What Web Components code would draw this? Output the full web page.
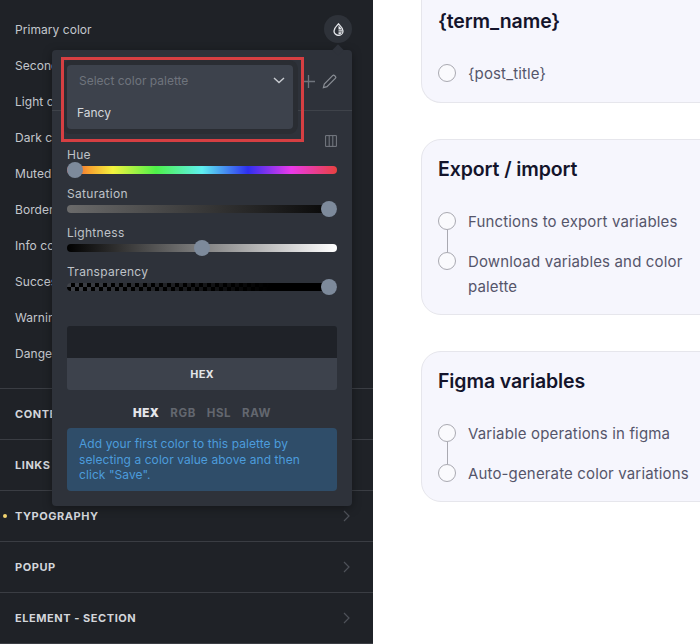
<!DOCTYPE html>
<html><head><meta charset="utf-8"><style>
html,body{margin:0;height:100%;overflow:hidden;background:#fff}
body{font-family:Inter,"Liberation Sans",sans-serif}
app-shell{height:644px;width:700px}
</style></head><body>
<app-shell>
  <side-panel slot="side">
    <color-row label="Primary color" active></color-row>
    <color-row label="Secondary color"></color-row>
    <color-row label="Light color"></color-row>
    <color-row label="Dark color"></color-row>
    <color-row label="Muted color"></color-row>
    <color-row label="Border color"></color-row>
    <color-row label="Info color"></color-row>
    <color-row label="Success color"></color-row>
    <color-row label="Warning color"></color-row>
    <color-row label="Danger color"></color-row>
    <section-row slot="sections" label="Content"></section-row>
    <section-row slot="sections" label="Links"></section-row>
    <section-row slot="sections" label="Typography" dot></section-row>
    <section-row slot="sections" label="Popup"></section-row>
    <section-row slot="sections" label="Element - Section"></section-row>
    <color-popup slot="overlay"></color-popup>
  </side-panel>
  <info-card slot="main" title="{term_name}" class="first">
    <step-item last>{post_title}</step-item>
  </info-card>
  <info-card slot="main" title="Export / import">
    <step-item>Functions to export variables</step-item>
    <step-item last>Download variables and color palette</step-item>
  </info-card>
  <info-card slot="main" title="Figma variables">
    <step-item>Variable operations in figma</step-item>
    <step-item last>Auto-generate color variations</step-item>
  </info-card>
</app-shell>
<script>
function def(name, html, extra){
  const t=document.createElement('template');t.innerHTML=html;
  customElements.define(name,class extends HTMLElement{
    constructor(){super();this.attachShadow({mode:'open'}).appendChild(t.content.cloneNode(true));}
    connectedCallback(){if(extra)extra(this,this.shadowRoot);}
  });
}
def('app-shell',`<style>
:host{display:grid;grid-template-columns:373px 1fr;overflow:hidden}
.main{display:flex;flex-direction:column;gap:36px;padding-left:48px;margin-right:-60px;min-width:0}
</style><slot name="side"></slot><div class="main"><slot name="main"></slot></div>`);

def('side-panel',`<style>
:host{display:block;position:relative;background:#1f2227;height:644px;color:#c9ccd2}
.rows{display:flex;flex-direction:column;padding-top:11px;height:366px;box-sizing:border-box}
.sections{display:flex;flex-direction:column;border-top:1px solid #3a3d43;margin-top:22px}
</style><div class="rows"><slot></slot></div><div class="sections"><slot name="sections"></slot></div><slot name="overlay"></slot>`);

def('color-row',`<style>
:host{display:flex;align-items:center;justify-content:space-between;height:36px;padding:0 21px 0 15px;font-size:12px;letter-spacing:.05px;color:#c4c7cd;flex:none}
.sw{width:28px;height:28px;border-radius:50%;background:#2e3239;display:none;align-items:center;justify-content:center}
:host([active]) .sw{display:flex}
svg{display:block}
</style><span id="l"></span><span class="sw"><svg width="11" height="13" viewBox="0 0 11 13"><path d="M5.500.9C4 2.800 1 4.700 1 7.900a4.500 4.500 0 0 0 9 0C10 4.700 7 2.800 5.500.9Z" fill="none" stroke="#e4e6ea" stroke-width="1.300"/><path d="M5.500 2.500C6.800 3.800 8.100 5 8.700 6.400H5.500ZM5.500 7.300H9.200V8.400H5.500ZM5.500 9.300H8.900A3.500 3.500 0 0 1 5.500 11.500Z" fill="#e4e6ea"/></svg></span>`,
(h,s)=>{s.getElementById('l').textContent=h.getAttribute('label');});

def('section-row',`<style>
:host{display:flex;align-items:center;justify-content:space-between;height:50px;border-bottom:1px solid #3a3d43;padding:0 23px 0 15px;position:relative;font-size:11px;font-weight:700;letter-spacing:.55px;text-transform:uppercase;color:#d3d6db;flex:none}
.dot{display:none;position:absolute;left:3px;top:23px;width:4px;height:4px;border-radius:50%;background:#f3d46f}
:host([dot]) .dot{display:block}
</style><span class="dot"></span><span id="l"></span><svg width="7" height="12" viewBox="0 0 7 12"><path d="M1 1l5 5-5 5" fill="none" stroke="#4e5259" stroke-width="1.200"/></svg>`,
(h,s)=>{s.getElementById('l').textContent=h.getAttribute('label');});

def('palette-bar',`<style>
:host{display:flex;align-items:flex-start;justify-content:space-between;height:61px;border-bottom:1px solid #3f434a;padding:15px 15px 0;box-sizing:border-box;position:relative}
.sel{width:226px;height:64px;background:#3d424c;border-radius:4px;box-shadow:0 0 0 5px #2a2d33;display:flex;flex-direction:column;font-size:12px;position:absolute;left:15px;top:15px;z-index:1}
.head{height:31px;display:flex;align-items:center;justify-content:space-between;padding:0 8px 0 12px;color:#6f747d;flex:none}
.opt{flex:1;display:flex;align-items:center;padding:0 10px;color:#d5d8dd}
.tools{margin-left:auto;display:flex;align-items:center;gap:7px;height:32px}
.hl{position:absolute;left:9px;top:7px;width:243px;height:85px;box-sizing:border-box;border:3px solid #d63f42;z-index:2;pointer-events:none}
</style>
<div class="sel"><div class="head"><span>Select color palette</span><svg width="12" height="7" viewBox="0 0 12 7"><path d="M1 1l5 4.600L11 1" fill="none" stroke="#c8cbd0" stroke-width="1.400"/></svg></div><div class="opt">Fancy</div></div>
<div class="hl"></div>
<div class="tools"><svg width="13" height="13" viewBox="0 0 13 13"><path d="M6.500 0v13M0 6.500h13" stroke="#70757d" stroke-width="1.300"/></svg>
<svg width="15" height="15" viewBox="0 0 15 15"><path d="M1.400 13.600l.9-3.600L10.600 1.700a1.500 1.500 0 0 1 2.100 0l.6.6a1.500 1.500 0 0 1 0 2.100L5 12.700Z" fill="none" stroke="#8a8e95" stroke-width="1.200"/></svg></div>`);

def('hsl-slider',`<style>
:host{display:block;height:39px;font-size:12px;letter-spacing:.3px;color:#bfc2c8;flex:none}
.l{display:block;height:15px;line-height:15px}
.t{position:relative;height:8px;margin-top:4px;border-radius:4px}
.k{position:absolute;top:-4px;width:16px;height:16px;border-radius:50%;background:#7d8a9b}
</style><span class="l" id="l"></span><div class="t" id="t"><div class="k" id="k"></div></div>`,
(h,s)=>{s.getElementById('l').textContent=h.getAttribute('label');
 s.getElementById('t').style.background=h.getAttribute('track');
 s.getElementById('k').style.left=h.getAttribute('pos');});

def('color-popup',`<style>
:host{display:block;position:absolute;left:52px;top:50px;width:300px;height:456px;background:#2e323a;border-radius:4px;box-shadow:0 2px 10px rgba(0,0,0,.35)}
.arrow{position:absolute;right:10px;top:-4px;width:8px;height:8px;background:#2e323a;transform:rotate(45deg)}
.body{padding:0 15px;display:flex;flex-direction:column}
.g{display:flex;justify-content:flex-end;height:12px;align-items:center;margin-top:24px}
.sl{display:flex;flex-direction:column}
.box{height:32px;background:#1f2228;border-radius:3px 3px 0 0;margin-top:23px}
.btn{height:32px;background:#3d424c;border-radius:0 0 3px 3px;display:flex;align-items:center;justify-content:center;font:700 11.500px "Roboto",sans-serif;letter-spacing:.6px;color:#e2e4e8}
.tabs{display:flex;justify-content:center;gap:11px;font-size:11.500px;font-weight:700;letter-spacing:.55px;color:#63676f;margin-top:16px;height:14px;line-height:14px}
.tabs b{color:#e4e6ea}
.note{margin-top:8px;background:#2f4d69;border-radius:4px;color:#4c9cdc;font-size:12px;line-height:15.500px;padding:8px 12px;height:63px;box-sizing:border-box;letter-spacing:.07px}
</style><div class="arrow"></div><palette-bar></palette-bar>
<div class="body">
<div class="g"><svg width="12" height="12" viewBox="0 0 12 12"><path d="M.6.6h10.800v10.800H.6zM4.200.6v10.800M7.800.6v10.800" fill="none" stroke="#777b83" stroke-width="1"/></svg></div>
<div class="sl">
<hsl-slider label="Hue" pos="0" track="linear-gradient(90deg,#e8413f 0%,#f9a02f 8%,#f4f33e 17%,#4ef14a 33%,#5ff0f0 50%,#2e2ff0 67%,#e93ae9 83%,#e8413f 100%)"></hsl-slider>
<hsl-slider label="Saturation" pos="254px" track="linear-gradient(90deg,#6b6b6b,#060606)"></hsl-slider>
<hsl-slider label="Lightness" pos="127px" track="linear-gradient(90deg,#000,#808080 50%,#fff)"></hsl-slider>
<hsl-slider label="Transparency" pos="254px" track="linear-gradient(90deg,transparent 0,#000 75%),repeating-conic-gradient(#000 0 25%,#3f4249 0 50%) 0 0/8px 8px"></hsl-slider>
</div>
<div class="box"></div><div class="btn">HEX</div>
<div class="tabs"><b>HEX</b><span>RGB</span><span>HSL</span><span>RAW</span></div>
<div class="note">Add your first color to this palette by selecting a color value above and then click "Save".</div>
</div>`);

def('info-card',`<style>
:host{display:block;background:#f6f6fd;border:1px solid #e6e6ec;border-radius:20px;padding:15px 16px 15px;box-sizing:border-box}
:host(.first){border-top:0;border-radius:0 0 20px 20px;padding-top:7px;padding-bottom:16px}
h3{margin:0 0 26px;font:600 19.500px/28px Inter,sans-serif;color:#14142b;letter-spacing:-.1px}
.list{display:flex;flex-direction:column}
</style><h3 id="t"></h3><div class="list"><slot></slot></div>`,
(h,s)=>{s.getElementById('t').textContent=h.getAttribute('title');});

def('step-item',`<style>
:host{display:grid;grid-template-columns:18px 1fr;column-gap:12px;font-size:15px;letter-spacing:.15px;line-height:25px;color:#55556a;padding-bottom:15px;position:relative;max-width:262px}
:host([last]){padding-bottom:0}
.c{width:16px;height:16px;border:1px solid #a9a9b1;border-radius:50%;background:#fafafd;margin-top:3px;position:relative;z-index:1}
.line{position:absolute;left:8.500px;top:21px;bottom:-3px;width:1px;background:#a9a9b1}
:host([last]) .line{display:none}
</style><span class="c"></span><span class="line"></span><span><slot></slot></span>`);
</script>
</body></html>
